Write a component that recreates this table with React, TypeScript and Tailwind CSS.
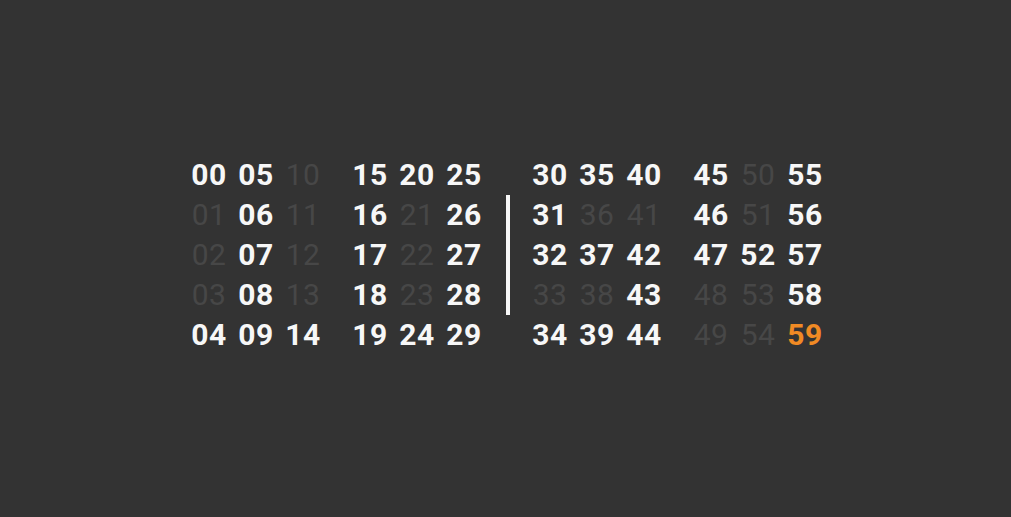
import React from "react";

const bold = new Set<number>([
  0, 5, 15, 20, 25, 30, 35, 40, 45, 55,
  6, 16, 26, 31, 46, 56,
  7, 17, 27, 32, 37, 42, 47, 52, 57,
  8, 18, 28, 43, 58,
  4, 9, 14, 19, 24, 29, 34, 39, 44,
]);

function Cell({ n }: { n: number }) {
  const label = n.toString().padStart(2, "0");
  const isOrange = n === 59;
  const isBold = bold.has(n) || isOrange;
  const cls = isOrange
    ? "text-[#f08a24] font-bold"
    : isBold
    ? "text-[#f7f7f7] font-bold"
    : "text-[#474747] font-normal";
  return (
    <div className={`w-[36px] h-[40px] flex items-center justify-center tracking-[0.5px] ${cls}`}>
      {label}
    </div>
  );
}

function Group({ start }: { start: number }) {
  return (
    <div className="flex gap-[11px]">
      {[0, 1, 2].map((c) => (
        <div key={c} className="flex flex-col">
          {[0, 1, 2, 3, 4].map((r) => (
            <Cell key={r} n={start + c * 5 + r} />
          ))}
        </div>
      ))}
    </div>
  );
}

export default function App() {
  return (
    <div
      className="w-[1011px] h-[517px] bg-[#333333] flex items-center justify-center pb-[7px]"
      style={{ fontFamily: "Roboto, 'Liberation Sans', sans-serif" }}
    >
      <div className="flex items-center text-[30px] leading-[40px] pl-[3px]">
        <Group start={0} />
        <div className="w-[31px]" />
        <Group start={15} />
        <div className="w-[24px]" />
        <div className="w-[4px] h-[120px] bg-[#f7f7f7] -mt-[1px]" />
        <div className="w-[22px]" />
        <Group start={30} />
        <div className="w-[31px]" />
        <Group start={45} />
      </div>
    </div>
  );
}
